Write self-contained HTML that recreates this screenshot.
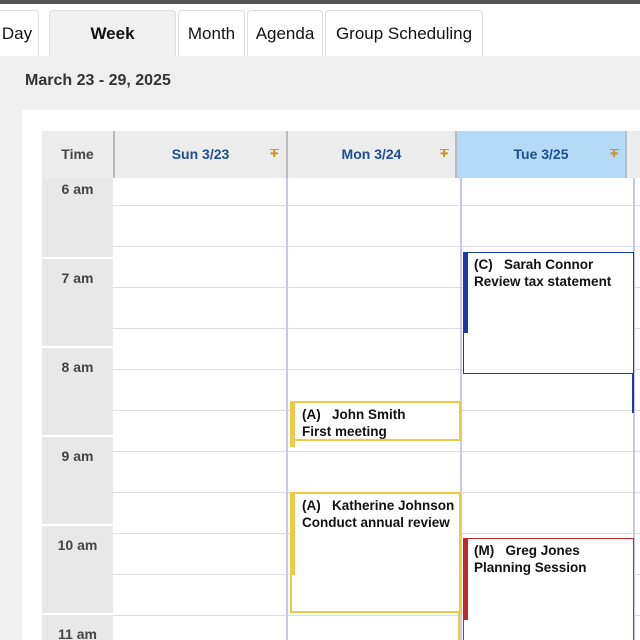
<html style="overflow:hidden;height:640px"><head><style>
body{margin:0;width:640px;height:640px;overflow:hidden;background:#efefef;font-family:"Liberation Sans",Arial,sans-serif;position:relative}
.a{position:absolute}
.tab{position:absolute;top:10px;height:46px;background:#fff;border:1px solid #ddd;border-bottom:none;border-radius:4px 4px 0 0;font-size:17px;color:#111;line-height:46px;text-align:center;box-sizing:border-box}
.hd{position:absolute;top:131px;height:47px;background:#ececec;font-weight:bold;font-size:14px;color:#1d4f91;line-height:47px;text-align:center;border-left:2px solid #bbb;box-sizing:border-box}
.pl{position:absolute;top:149px;width:9px;height:9px;font-size:10px;line-height:9px;color:#c9961a;border-top:1px solid #999}
.tl{position:absolute;left:42px;width:71px;text-align:center;font-weight:bold;font-size:14px;color:#444}
.ev{position:absolute;box-sizing:border-box;background:#fff;font-weight:bold;font-size:13.5px;color:#111;padding:3px 0 0 10px;line-height:17px}
.bar{position:absolute;width:5px}
</style></head><body>
<div class="a" style="left:0;top:0;width:640px;height:4px;background:#555"></div>
<div class="a" style="left:0;top:4px;width:640px;height:52px;background:#fff"></div>
<div class="tab" style="left:-5px;width:44px">Day</div>
<div class="tab" style="left:49px;width:127px;background:#f0f0f0;font-weight:bold">Week</div>
<div class="tab" style="left:178px;width:67px">Month</div>
<div class="tab" style="left:247px;width:76px">Agenda</div>
<div class="tab" style="left:325px;width:158px">Group Scheduling</div>
<div class="a" style="left:25px;top:72px;font-size:16px;font-weight:bold;color:#333">March 23 - 29, 2025</div>
<div class="a" style="left:22px;top:110px;width:620px;height:530px;background:#fff"></div>
<div class="hd" style="left:42px;width:71px;color:#444;border:none">Time</div>
<div class="hd" style="left:113px;width:173px">Sun 3/23</div>
<div class="hd" style="left:286px;width:169px">Mon 3/24</div>
<div class="hd" style="left:455px;width:170px;background:#b5daf8">Tue 3/25</div>
<div class="hd" style="left:625px;width:20px"></div>
<div class="pl" style="left:270px">✚</div><div class="pl" style="left:440px">✚</div><div class="pl" style="left:610px">✚</div>
<div class="a" style="left:42px;top:178px;width:71px;height:462px;background:repeating-linear-gradient(#e8e8e8 0 79px,#fff 79px 81px,#e8e8e8 81px 89px)"></div>
<div class="a" style="left:113px;top:178px;width:527px;height:462px;background:#fff"></div>
<div class="a" style="left:113px;top:206px;width:527px;height:434px;background:repeating-linear-gradient(#fff 0 40px,#dcdce4 40px 41px)"></div>
<div class="a" style="left:113px;top:205px;width:527px;height:1px;background:#dcdce4"></div>
<div class="a" style="left:286px;top:178px;width:2px;height:462px;background:#c8c8e4"></div>
<div class="a" style="left:460px;top:178px;width:2px;height:462px;background:#c8c8e4"></div>
<div class="a" style="left:633px;top:178px;width:2px;height:462px;background:#c8c8e4"></div>
<div class="tl" style="top:181px">6 am</div><div class="tl" style="top:270px">7 am</div><div class="tl" style="top:359px">8 am</div><div class="tl" style="top:448px">9 am</div><div class="tl" style="top:537px">10 am</div><div class="tl" style="top:626px">11 am</div>
<div class="ev" style="left:463px;top:252px;width:171px;height:122px;border:1px solid #1a3aa8">(C)&nbsp;&nbsp; Sarah Connor<br>Review tax statement</div>
<div class="bar" style="left:463px;top:252px;height:81px;background:#1a3aa8"></div>
<div class="a" style="left:632px;top:374px;width:2px;height:39px;background:#1a3aa8"></div>
<div class="ev" style="left:290px;top:401px;width:171px;height:40px;border:2px solid #f0c94a">(A)&nbsp;&nbsp; John Smith<br>First meeting</div>
<div class="bar" style="left:290px;top:401px;height:46px;background:#f0c94a"></div>
<div class="ev" style="left:290px;top:492px;width:171px;height:121px;border:2px solid #f0c94a">(A)&nbsp;&nbsp; Katherine Johnson<br>Conduct annual review</div>
<div class="bar" style="left:290px;top:492px;height:83px;background:#f0c94a"></div>
<div class="a" style="left:458px;top:612px;width:2px;height:28px;background:#f0c94a"></div>
<div class="ev" style="left:463px;top:538px;width:171px;height:102px;border:1px solid #c0282d;border-bottom:none">(M)&nbsp;&nbsp; Greg Jones<br>Planning Session</div>
<div class="bar" style="left:463px;top:538px;height:82px;background:#c0282d"></div>
</body></html>
